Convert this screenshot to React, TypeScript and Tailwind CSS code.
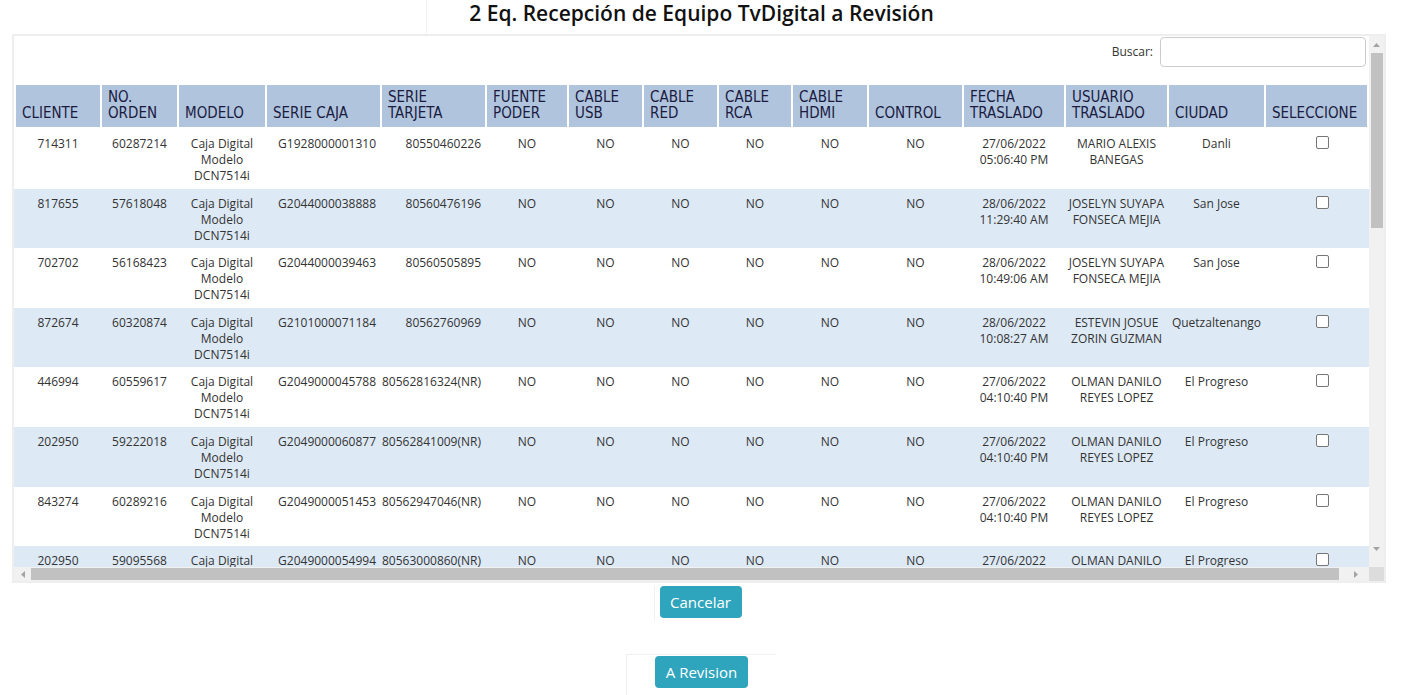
import React from "react";

type Row = {
  cliente: string;
  orden: string;
  caja: string;
  tarjeta: string;
  fecha: [string, string];
  usuario: [string, string];
  ciudad: string;
};

const rows: Row[] = [
  { cliente: "714311", orden: "60287214", caja: "G1928000001310", tarjeta: "80550460226", fecha: ["27/06/2022", "05:06:40 PM"], usuario: ["MARIO ALEXIS", "BANEGAS"], ciudad: "Danli" },
  { cliente: "817655", orden: "57618048", caja: "G2044000038888", tarjeta: "80560476196", fecha: ["28/06/2022", "11:29:40 AM"], usuario: ["JOSELYN SUYAPA", "FONSECA MEJIA"], ciudad: "San Jose" },
  { cliente: "702702", orden: "56168423", caja: "G2044000039463", tarjeta: "80560505895", fecha: ["28/06/2022", "10:49:06 AM"], usuario: ["JOSELYN SUYAPA", "FONSECA MEJIA"], ciudad: "San Jose" },
  { cliente: "872674", orden: "60320874", caja: "G2101000071184", tarjeta: "80562760969", fecha: ["28/06/2022", "10:08:27 AM"], usuario: ["ESTEVIN JOSUE", "ZORIN GUZMAN"], ciudad: "Quetzaltenango" },
  { cliente: "446994", orden: "60559617", caja: "G2049000045788", tarjeta: "80562816324(NR)", fecha: ["27/06/2022", "04:10:40 PM"], usuario: ["OLMAN DANILO", "REYES LOPEZ"], ciudad: "El Progreso" },
  { cliente: "202950", orden: "59222018", caja: "G2049000060877", tarjeta: "80562841009(NR)", fecha: ["27/06/2022", "04:10:40 PM"], usuario: ["OLMAN DANILO", "REYES LOPEZ"], ciudad: "El Progreso" },
  { cliente: "843274", orden: "60289216", caja: "G2049000051453", tarjeta: "80562947046(NR)", fecha: ["27/06/2022", "04:10:40 PM"], usuario: ["OLMAN DANILO", "REYES LOPEZ"], ciudad: "El Progreso" },
  { cliente: "202950", orden: "59095568", caja: "G2049000054994", tarjeta: "80563000860(NR)", fecha: ["27/06/2022", "04:10:40 PM"], usuario: ["OLMAN DANILO", "REYES LOPEZ"], ciudad: "El Progreso" },
];

const headers: { lines: string[]; w: string }[] = [
  { lines: ["CLIENTE"], w: "w-[86px]" },
  { lines: ["NO.", "ORDEN"], w: "w-[77px]" },
  { lines: ["MODELO"], w: "w-[88px]" },
  { lines: ["SERIE CAJA"], w: "w-[115px]" },
  { lines: ["SERIE", "TARJETA"], w: "w-[105px]" },
  { lines: ["FUENTE", "PODER"], w: "w-[82px]" },
  { lines: ["CABLE", "USB"], w: "w-[75px]" },
  { lines: ["CABLE", "RED"], w: "w-[75px]" },
  { lines: ["CABLE", "RCA"], w: "w-[74px]" },
  { lines: ["CABLE", "HDMI"], w: "w-[76px]" },
  { lines: ["CONTROL"], w: "w-[95px]" },
  { lines: ["FECHA", "TRASLADO"], w: "w-[102px]" },
  { lines: ["USUARIO", "TRASLADO"], w: "w-[103px]" },
  { lines: ["CIUDAD"], w: "w-[97px]" },
  { lines: ["SELECCIONE"], w: "w-[103px]" },
];

function Cell({ w, align = "text-center", children }: { w: string; align?: string; children: React.ReactNode }) {
  return <div className={`${w} shrink-0 pl-[2px] ${align}`}>{children}</div>;
}

function Lines({ l }: { l: string[] }) {
  return (
    <>
      {l.map((t, i) => (
        <div key={i} className="whitespace-nowrap">{t}</div>
      ))}
    </>
  );
}

function Arrow({ dir }: { dir: "up" | "down" | "left" | "right" }) {
  const pts =
    dir === "up" ? "0,4 3.5,0 7,4" : dir === "down" ? "0,0 3.5,4 7,0" : dir === "left" ? "4,0 0,3.5 4,7" : "0,0 4,3.5 0,7";
  const w = dir === "up" || dir === "down" ? 7 : 4;
  const h = dir === "up" || dir === "down" ? 4 : 7;
  return (
    <svg width={w} height={h} viewBox={`0 0 ${w} ${h}`}>
      <polygon points={pts} fill="#a3a3a3" />
    </svg>
  );
}

export default function App() {
  return (
    <div className="w-[1402px] h-[695px] bg-white overflow-hidden font-['Open_Sans',sans-serif]">
      {/* Title */}
      <div className="h-[34px] flex justify-center">
        <div className="w-[551px] border-l border-[#f2f2f2] flex justify-center">
          <h1 className="text-[21px] leading-[26px] font-semibold text-[#111111] whitespace-nowrap">
            2 Eq. Recepción de Equipo TvDigital a Revisión
          </h1>
        </div>
      </div>

      {/* Panel */}
      <div className="ml-[12px] w-[1374px] h-[549px] border-2 border-[#eeeeee] flex flex-col">
        <div className="flex h-[531px]">
          <div className="w-[1355px] overflow-hidden bg-white">
            {/* search */}
            <div className="h-[49px] flex justify-end items-start pt-[1px] pr-[3px]">
              <div className="flex items-center h-[30px]">
                <span className="text-[12px] text-[#333333] mr-[7px]">Buscar:</span>
                <div className="w-[206px] h-[30px] border border-[#cccccc] rounded-[4px] bg-white" />
              </div>
            </div>

            {/* header */}
            <div className="flex h-[42px] mb-[2px] font-['Liberation_Sans_Narrow','DejaVu_Sans_Condensed',sans-serif] text-[15px] leading-[16px] text-[#1b1b3f]">
              {headers.map((h, i) => (
                <div
                  key={i}
                  className={`${h.w} shrink-0 border-l-2 border-white bg-[#b0c4de] flex flex-col justify-end pl-[6px] pb-[6px]`}
                >
                  <Lines l={h.lines} />
                </div>
              ))}
            </div>

            {/* rows */}
            {rows.map((r, i) => (
              <div
                key={i}
                className={`flex h-[59.6px] pt-[7px] text-[12px] leading-[16px] text-[#333333] ${i % 2 === 1 ? "bg-[#dde9f5]" : "bg-white"}`}
              >
                <Cell w="w-[86px]">{r.cliente}</Cell>
                <Cell w="w-[77px]">{r.orden}</Cell>
                <Cell w="w-[88px]"><Lines l={["Caja Digital", "Modelo", "DCN7514i"]} /></Cell>
                <Cell w="w-[115px]" align="text-right pr-[4px]">{r.caja}</Cell>
                <Cell w="w-[105px]" align="text-right pr-[4px]">{r.tarjeta}</Cell>
                <Cell w="w-[82px]">NO</Cell>
                <Cell w="w-[75px]">NO</Cell>
                <Cell w="w-[75px]">NO</Cell>
                <Cell w="w-[74px]">NO</Cell>
                <Cell w="w-[76px]">NO</Cell>
                <Cell w="w-[95px]">NO</Cell>
                <Cell w="w-[102px]"><Lines l={r.fecha} /></Cell>
                <Cell w="w-[103px]"><Lines l={r.usuario} /></Cell>
                <Cell w="w-[97px]">{r.ciudad}</Cell>
                <div className="w-[103px] shrink-0 pl-[52px]">
                  <div className="w-[13px] h-[13px] rounded-[2px] border border-[#767676] bg-white" />
                </div>
              </div>
            ))}
          </div>

          {/* vertical scrollbar */}
          <div className="w-[15px] bg-[#f1f1f1] flex flex-col items-center">
            <div className="h-[17px] flex items-center justify-center"><Arrow dir="up" /></div>
            <div className="w-[12px] h-[175px] bg-[#c1c1c1]" />
            <div className="flex-1" />
            <div className="h-[22px] flex items-start pt-[2px] justify-center"><Arrow dir="down" /></div>
          </div>
        </div>

        {/* horizontal scrollbar */}
        <div className="flex h-[14px]">
          <div className="w-[1355px] bg-[#f1f1f1] flex items-center">
            <div className="w-[17px] flex justify-center"><Arrow dir="left" /></div>
            <div className="w-[1308px] h-[12px] bg-[#c1c1c1]" />
            <div className="w-[30px] flex justify-center pl-[4px]"><Arrow dir="right" /></div>
          </div>
          <div className="w-[15px] bg-[#dcdcdc]" />
        </div>
      </div>

      {/* Cancelar */}
      <div className="flex justify-center mt-[2px]">
        <div className="w-[95px] border-l border-[#f0f0f0] pl-[5px] pt-[1px] pb-[2px]">
          <button className="w-[82px] h-[32px] rounded-[4px] bg-[#2fa5bd] text-white text-[15px] leading-[20px]">
            Cancelar
          </button>
        </div>
      </div>

      {/* A Revision */}
      <div className="flex justify-center mt-[34px]">
        <div className="w-[150px] h-[60px] border-t border-l border-[#f0f0f0] pl-[28px] pt-[1px]">
          <button className="w-[93px] h-[32px] rounded-[4px] bg-[#2fa5bd] text-white text-[15px] leading-[20px]">
            A Revision
          </button>
        </div>
      </div>
    </div>
  );
}
